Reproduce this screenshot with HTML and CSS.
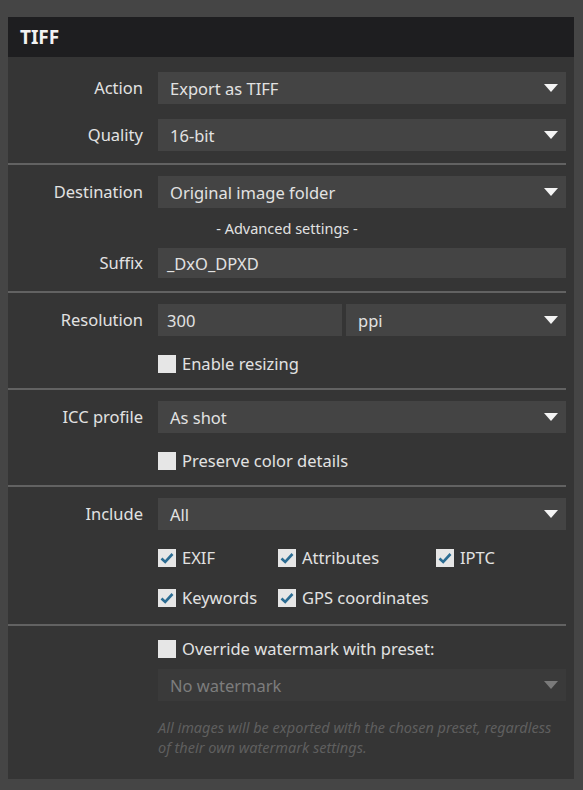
FILE: index.html
```html
<!DOCTYPE html>
<html>
<head>
<meta charset="utf-8">
<link rel="stylesheet" href="styles.css">
</head>
<body>
<div class="panel">
  <div class="header">TIFF</div>
  <div class="body">
    <div class="section s1">
      <div class="row">
        <div class="label">Action</div>
        <div class="select"><span>Export as TIFF</span><i class="arrow"></i></div>
      </div>
      <div class="row">
        <div class="label">Quality</div>
        <div class="select"><span>16-bit</span><i class="arrow"></i></div>
      </div>
    </div>
    <div class="sep"></div>
    <div class="section s2">
      <div class="row">
        <div class="label">Destination</div>
        <div class="select"><span>Original image folder</span><i class="arrow"></i></div>
      </div>
      <div class="advanced">- Advanced settings -</div>
      <div class="row">
        <div class="label">Suffix</div>
        <div class="input">_DxO_DPXD</div>
      </div>
    </div>
    <div class="sep"></div>
    <div class="section s3">
      <div class="row">
        <div class="label">Resolution</div>
        <div class="split">
          <div class="input tall">300</div>
          <div class="select"><span>ppi</span><i class="arrow"></i></div>
        </div>
      </div>
      <div class="row">
        <div class="label"></div>
        <label class="check"><span class="box"></span>Enable resizing</label>
      </div>
    </div>
    <div class="sep"></div>
    <div class="section s3">
      <div class="row">
        <div class="label">ICC profile</div>
        <div class="select"><span>As shot</span><i class="arrow"></i></div>
      </div>
      <div class="row">
        <div class="label"></div>
        <label class="check"><span class="box"></span>Preserve color details</label>
      </div>
    </div>
    <div class="sep"></div>
    <div class="section s4">
      <div class="row">
        <div class="label">Include</div>
        <div class="select"><span>All</span><i class="arrow"></i></div>
      </div>
      <div class="row">
        <div class="label"></div>
        <div class="checkgrid">
          <label class="check"><span class="box on"><svg viewBox="0 0 18 18"><path d="M3.5 9.5 L7.2 13 L14.5 5" /></svg></span>EXIF</label>
          <label class="check"><span class="box on"><svg viewBox="0 0 18 18"><path d="M3.5 9.5 L7.2 13 L14.5 5" /></svg></span>Attributes</label>
          <label class="check"><span class="box on"><svg viewBox="0 0 18 18"><path d="M3.5 9.5 L7.2 13 L14.5 5" /></svg></span>IPTC</label>
          <label class="check"><span class="box on"><svg viewBox="0 0 18 18"><path d="M3.5 9.5 L7.2 13 L14.5 5" /></svg></span>Keywords</label>
          <label class="check"><span class="box on"><svg viewBox="0 0 18 18"><path d="M3.5 9.5 L7.2 13 L14.5 5" /></svg></span>GPS coordinates</label>
        </div>
      </div>
    </div>
    <div class="sep"></div>
    <div class="section s5">
      <div class="row">
        <div class="label"></div>
        <label class="check"><span class="box"></span>Override watermark with preset:</label>
      </div>
      <div class="row">
        <div class="label"></div>
        <div class="select disabled"><span>No watermark</span><i class="arrow"></i></div>
      </div>
      <div class="row">
        <div class="label"></div>
        <div class="note">All images will be exported with the chosen preset, regardless of their own watermark settings.</div>
      </div>
    </div>
  </div>
</div>
</body>
</html>
```

FILE: styles.css
```css
html, body {
  margin: 0;
  padding: 0;
  background: #454545;
}
body {
  font-family: "Noto Sans", "Open Sans", sans-serif;
  color: #e2e2e2;
  font-size: 16.5px;
}
.panel {
  margin: 17px 0 0 8px;
  width: 566px;
  background: #353535;
}
.header {
  height: 40px;
  background: #1e1e20;
  color: #f2f2f2;
  font-weight: bold;
  font-size: 19px;
  line-height: 40px;
  padding-left: 12px;
}
.body {
  padding: 0 8px 0 0;
}
.section {
  display: flex;
  flex-direction: column;
}
.s1 { padding: 15px 0 12px; gap: 15px; }
.s2 { padding: 11px 0 13px; }
.s3 { padding: 11px 0 14px; gap: 18px; }
.s4 { padding: 11px 0 16px; gap: 18px; }
.s5 { padding: 13px 0 22px; }
.row {
  display: grid;
  grid-template-columns: 135px 408px;
  column-gap: 15px;
  align-items: center;
}
.label {
  text-align: right;
  line-height: 20px;
}
.select, .input {
  background: #444444;
  height: 32px;
  display: flex;
  align-items: center;
  box-sizing: border-box;
}
.select {
  padding: 0 8px 0 12px;
  justify-content: space-between;
}
.input {
  padding-left: 9px;
  height: 30px;
}
.input.tall { height: 32px; }
.arrow {
  width: 0;
  height: 0;
  border-left: 7px solid transparent;
  border-right: 7px solid transparent;
  border-top: 8px solid #f4f4f4;
}
.split {
  display: grid;
  grid-template-columns: 184px 220px;
  column-gap: 4px;
}
.sep {
  height: 2px;
  background: #626262;
}
.advanced {
  text-align: center;
  font-size: 14.5px;
  line-height: 20px;
  margin: 10px 0 10px 0;
}
.check {
  display: flex;
  align-items: center;
  gap: 6px;
  line-height: 20px;
}
.box {
  width: 18px;
  height: 18px;
  background: #e6e6e6;
  flex: none;
  display: block;
}
.box svg {
  display: block;
  width: 18px;
  height: 18px;
}
.box svg path {
  fill: none;
  stroke: #2b6c92;
  stroke-width: 2.6;
}
.checkgrid {
  display: grid;
  grid-template-columns: 120px 158px auto;
  row-gap: 20px;
}
.s5 .select.disabled {
  margin-top: 10px;
  background: #3a3a3a;
  color: #7d7d7d;
}
.select.disabled .arrow {
  border-top-color: #7a7a7a;
}
.note {
  margin-top: 16px;
  font-style: italic;
  font-size: 14.5px;
  line-height: 20px;
  color: #5f5f5f;
}
```
